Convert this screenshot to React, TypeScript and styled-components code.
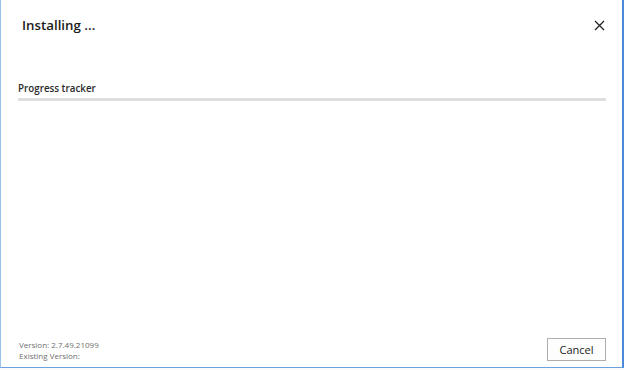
import React from 'react';
import styled, { createGlobalStyle } from 'styled-components';

const GlobalStyle = createGlobalStyle`
  html, body {
    margin: 0;
    padding: 0;
    background: #fbfbfb;
  }
  body {
    font-family: "Segoe UI", "Open Sans", "Noto Sans", sans-serif;
  }
`;

const Window = styled.div`
  box-sizing: border-box;
  width: 624px;
  height: 368px;
  background: #ffffff;
  border-left: 1px solid #9cc3ee;
  border-right: 2px solid #4a8ad8;
  border-bottom: 1px solid #6aa0e0;
  display: flex;
  flex-direction: column;
`;

const Header = styled.div`
  display: flex;
  align-items: center;
  justify-content: space-between;
  padding: 13px 16px 0 21px;
  height: 24px;
`;

const Title = styled.h1`
  margin: 0;
  font-size: 13.3px;
  font-weight: 600;
  color: #1b1b1b;
`;

const CloseButton = styled.button`
  border: none;
  background: transparent;
  padding: 0;
  width: 14px;
  height: 14px;
  display: flex;
  align-items: center;
  justify-content: center;
  cursor: pointer;
`;

const Body = styled.div`
  flex: 1;
  padding: 45px 16px 0 17px;
`;

const Label = styled.div`
  font-size: 9.8px;
  font-weight: 600;
  color: #2a2a2a;
  margin-bottom: 3px;
`;

const Track = styled.div`
  height: 3px;
  background: #dedede;
`;

const Footer = styled.div`
  display: flex;
  align-items: flex-end;
  justify-content: space-between;
  padding: 0 16px 6px 18px;
`;

const VersionInfo = styled.div`
  font-size: 8px;
  line-height: 11px;
  color: #6f6f6f;
`;

const Button = styled.button`
  box-sizing: border-box;
  width: 59px;
  height: 23px;
  border: 1px solid #adadad;
  background: #fdfdfd;
  font-family: inherit;
  font-size: 11px;
  color: #1b1b1b;
  padding: 0;
  cursor: pointer;
`;

export default function App() {
  return (
    <>
      <GlobalStyle />
      <Window>
        <Header>
          <Title>Installing ...</Title>
          <CloseButton aria-label="Close">
            <svg width="11" height="11" viewBox="0 0 11 11">
              <path d="M1 1 L10 10 M10 1 L1 10" stroke="#222" strokeWidth="1.3" fill="none" />
            </svg>
          </CloseButton>
        </Header>
        <Body>
          <Label>Progress tracker</Label>
          <Track />
        </Body>
        <Footer>
          <VersionInfo>
            <div>Version: 2.7.49.21099</div>
            <div>Existing Version:</div>
          </VersionInfo>
          <Button>Cancel</Button>
        </Footer>
      </Window>
    </>
  );
}
